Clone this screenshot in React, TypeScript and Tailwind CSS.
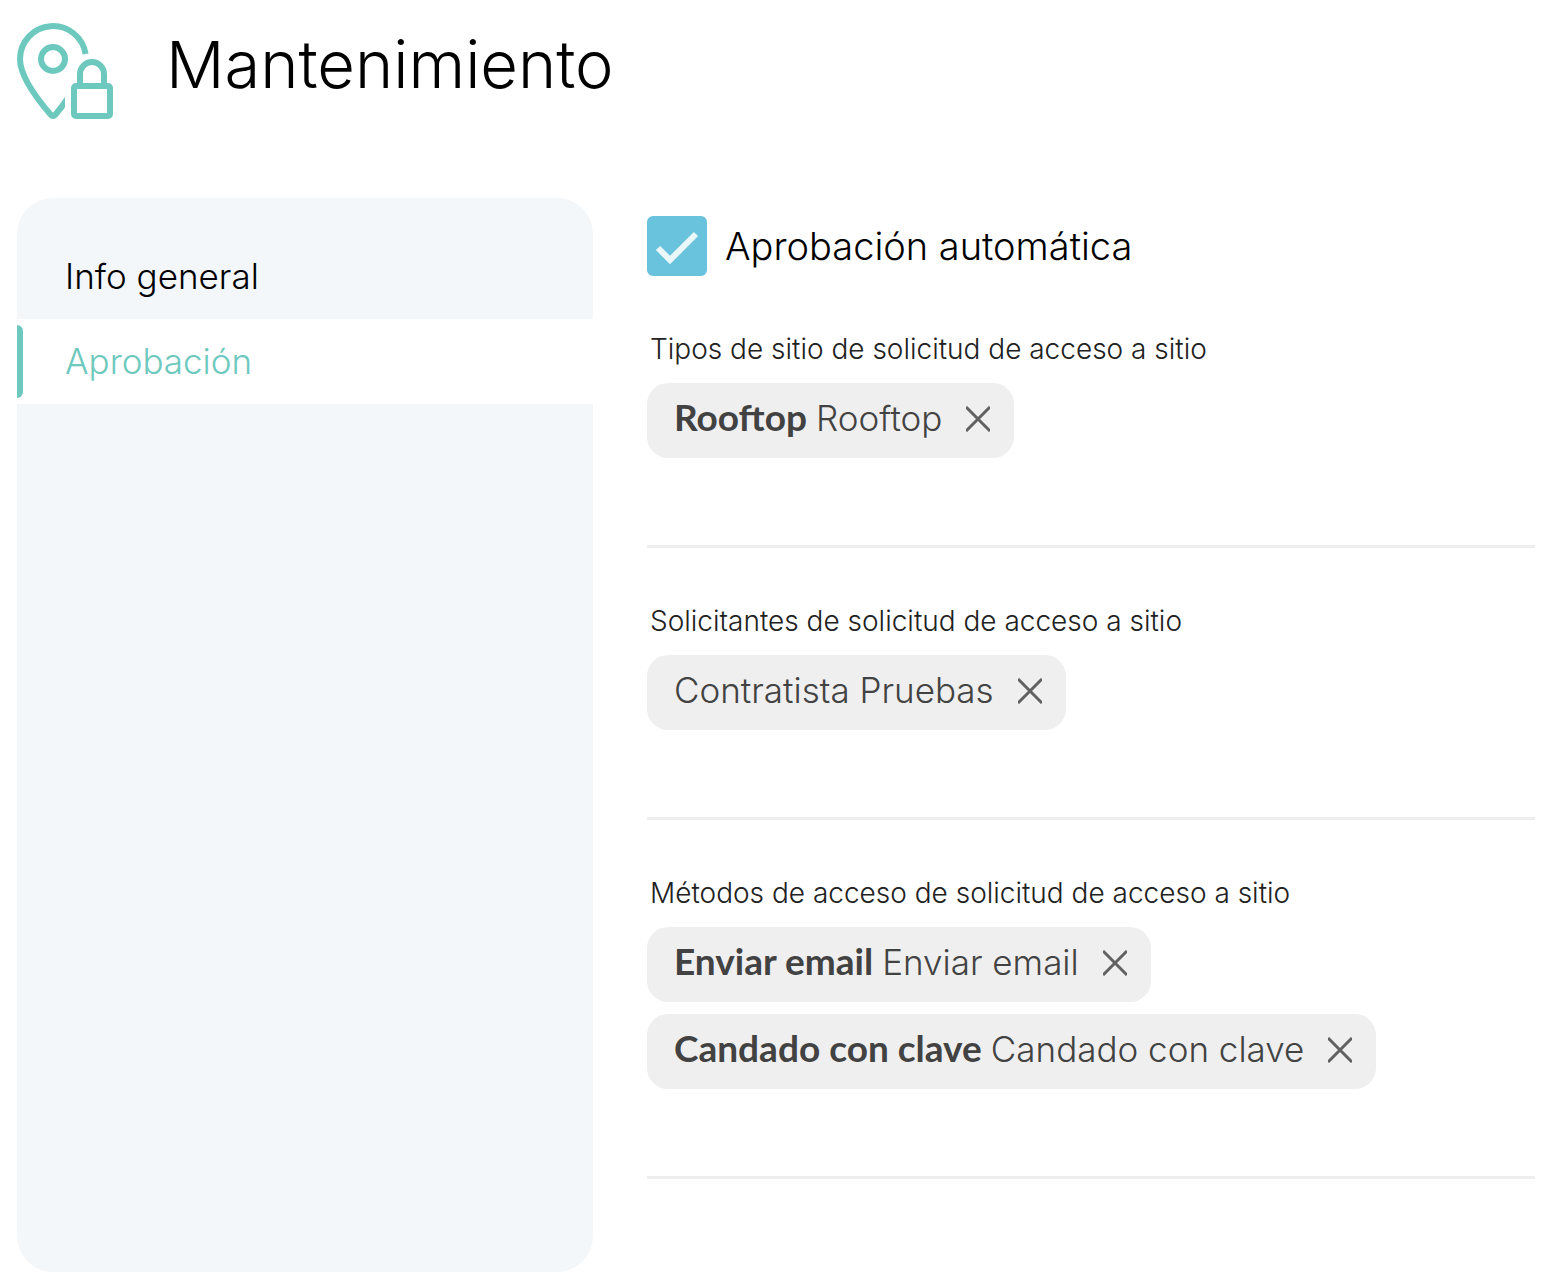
import { useState } from "react";

type Tag = { code?: string; name: string };
type Group = { title: string; tags: Tag[] };

const initialGroups: Group[] = [
  {
    title: "Tipos de sitio de solicitud de acceso a sitio",
    tags: [{ code: "Rooftop", name: "Rooftop" }],
  },
  {
    title: "Solicitantes de solicitud de acceso a sitio",
    tags: [{ name: "Contratista Pruebas" }],
  },
  {
    title: "Métodos de acceso de solicitud de acceso a sitio",
    tags: [
      { code: "Enviar email", name: "Enviar email" },
      { code: "Candado con clave", name: "Candado con clave" },
    ],
  },
];

function SiteLockIcon() {
  return (
    <svg viewBox="0 0 96 96" className="size-24 shrink-0" fill="none" stroke="#6dc9be" strokeWidth="6" aria-hidden="true">
      <defs>
        <clipPath id="pin-edge">
          <path d="M0 0H96V50H48V96H0Z" />
        </clipPath>
      </defs>
      <path
        clipPath="url(#pin-edge)"
        d="M68.6 31A33 33 0 0 0 3 36C3 52 18 73.500 33.500 91.500Q36 94.500 38.500 91.500Q45 84 52 73.500"
      />
      <circle cx="36" cy="36" r="12" />
      <path d="M63 63V51a12 12 0 0 1 24 0V63" />
      <rect x="57" y="63" width="36" height="30" rx="2" />
    </svg>
  );
}

function Chip({ tag, onRemove }: { tag: Tag; onRemove: () => void }) {
  return (
    <li className="flex items-center gap-6 rounded-[21px] bg-[#efefef] pt-2 pr-6 pb-3 pl-[27px] text-[35px] leading-[55px] text-[#424242]">
      <span>
        {tag.code && (
          <b className="font-['Lato','Inter',sans-serif] text-[37px] leading-none font-bold">{tag.code} </b>
        )}
        {tag.name}
      </span>
      <button type="button" aria-label={`Quitar ${tag.name}`} onClick={onRemove} className="cursor-pointer">
        <svg viewBox="0 0 24 26" className="h-[26px] w-6" stroke="#616161" strokeWidth="3" aria-hidden="true">
          <path d="M0 1L24 25M24 1L0 25" />
        </svg>
      </button>
    </li>
  );
}

export default function App() {
  const [groups, setGroups] = useState(initialGroups);
  const [auto, setAuto] = useState(true);

  const remove = (g: number, t: number) =>
    setGroups(groups.map((x, i) => (i === g ? { ...x, tags: x.tags.filter((_, j) => j !== t) } : x)));

  return (
    <div className="flex min-h-screen flex-col bg-white pt-[23px] pr-[33px] pb-2 pl-[17px] font-['Inter','Open_Sans',sans-serif] font-light text-black">
      <header className="flex items-start gap-[53px]">
        <SiteLockIcon />
        <h1 className="text-[65px] leading-[83px]">Mantenimiento</h1>
      </header>

      <div className="mt-[79px] flex grow gap-[54px]">
        <nav className="w-[576px] shrink-0 rounded-[36px] bg-[#f3f7fa] pt-9 text-[35px] leading-[85px]">
          <a href="#info" className="block pl-12">
            Info general
          </a>
          <a href="#aprobacion" aria-current="page" className="flex items-center gap-[42px] bg-white text-[#6dc9be]">
            <span className="h-[73px] w-1.5 rounded-r-md bg-[#6dc9be]" />
            Aprobación
          </a>
        </nav>

        <main className="min-w-0 grow pt-[18px]">
          <label className="flex items-center gap-[18px] text-[38px] leading-[60px]">
            <span className="grid size-[60px] shrink-0">
              <input
                type="checkbox"
                checked={auto}
                onChange={(e) => setAuto(e.target.checked)}
                className="peer col-start-1 row-start-1 size-[60px] appearance-none rounded-md border-2 border-[#6ac3dc] bg-white checked:bg-[#6ac3dc]"
              />
              <svg
                viewBox="0 0 60 60"
                className="pointer-events-none col-start-1 row-start-1 hidden size-[60px] peer-checked:block"
                fill="none"
                stroke="#eaf7fb"
                strokeWidth="6"
                aria-hidden="true"
              >
                <path d="M11 32L23 44L49 18" />
              </svg>
            </span>
            Aprobación automática
          </label>

          <div className="pt-12">
            {groups.map((group, g) => (
              <section key={group.title} className="mb-12 border-b-[3px] border-[#eeeeee] pb-[87px]">
                <h2 className="pl-[3px] text-[28px] leading-[50px] text-[#212121]">{group.title}</h2>
                <ul className="mt-[9px] flex flex-col items-start gap-3">
                  {group.tags.map((tag, t) => (
                    <Chip key={tag.name} tag={tag} onRemove={() => remove(g, t)} />
                  ))}
                </ul>
              </section>
            ))}
          </div>
        </main>
      </div>
    </div>
  );
}
